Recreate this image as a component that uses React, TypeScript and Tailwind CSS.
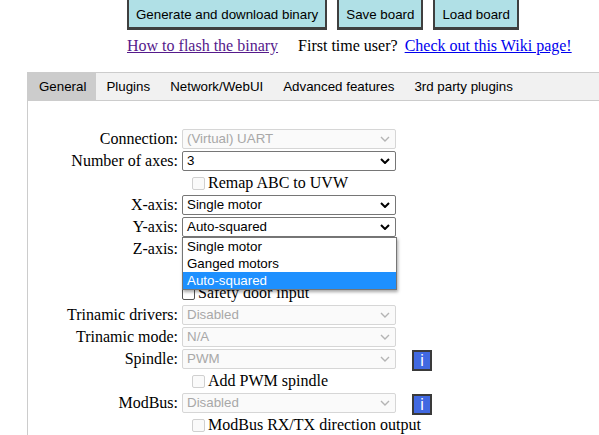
import React from 'react';

const serif = { fontFamily: '"Liberation Serif", "Times New Roman", serif' };
const sans = { fontFamily: '"Liberation Sans", Arial, sans-serif' };

const Chevron: React.FC<{ disabled?: boolean }> = ({ disabled }) => (
    <svg width="10" height="6" viewBox="0 0 10 6" className="shrink-0">
        <path
            d="M1 1 L5 5 L9 1"
            fill="none"
            stroke={disabled ? '#b4b4b4' : '#000'}
            strokeWidth={disabled ? 1.4 : 2}
        />
    </svg>
);

// Поле выбора в стиле нативного select
const Select: React.FC<{ value: string; disabled?: boolean }> = ({ value, disabled }) => (
    <div
        className={
            'ml-[4px] flex h-[20px] w-[214px] items-center justify-between rounded-[2px] border pl-[4px] pr-[5px] text-[13.333px] ' +
            (disabled
                ? 'border-[#d6d6d6] bg-[#fafafa] text-[#a8a8a8]'
                : 'border-[#767676] bg-white text-black')
        }
        style={sans}
    >
        <span>{value}</span>
        <Chevron disabled={disabled} />
    </div>
);

const Checkbox: React.FC<{ label: string; disabled?: boolean; indent?: boolean }> = ({
    label,
    disabled,
    indent,
}) => (
    <div className={'flex h-[22px] items-center ' + (indent ? 'pl-[164px]' : 'pl-[154px]')}>
        <span
            className={
                'h-[13px] w-[13px] rounded-[2px] border ' +
                (disabled ? 'border-[#d0d0d0] bg-[#fafafa]' : 'border-[#555] bg-white')
            }
        />
        <span className="ml-[3px] text-[16px] text-black" style={serif}>
            {label}
        </span>
    </div>
);

const InfoButton: React.FC = () => (
    <div
        className="ml-[16px] mt-[3px] flex h-[21px] w-[20px] items-center justify-center border-2 border-[#3a3a3a] bg-[#4169e1] text-[16px] text-white"
        style={sans}
    >
        i
    </div>
);

const Row: React.FC<{ label: string; value: string; disabled?: boolean; info?: boolean }> = ({
    label,
    value,
    disabled,
    info,
}) => (
    <div className="flex h-[22px] items-center">
        <div className="w-[150px] text-right text-[16px] text-black" style={serif}>
            {label}
        </div>
        <Select value={value} disabled={disabled} />
        {info && <InfoButton />}
    </div>
);

const tabs = ['General', 'Plugins', 'Network/WebUI', 'Advanced features', '3rd party plugins'];

const TopButton: React.FC<{ children: React.ReactNode }> = ({ children }) => (
    <div
        className="flex h-[33px] items-center border-2 border-b-[3px] border-[#3f3f3f] bg-[#b0e0e6] px-[7px] pt-[4px] text-[13.333px] text-black"
        style={sans}
    >
        {children}
    </div>
);

export default function App() {
    return (
        <div className="relative h-[435px] w-[599px] overflow-hidden bg-white">
            {/* Кнопки и ссылки сверху */}
            <div className="-mt-[3px] pl-[127px]">
                <div className="flex gap-[10px]">
                    <TopButton>Generate and download binary</TopButton>
                    <TopButton>Save board</TopButton>
                    <TopButton>Load board</TopButton>
                </div>
                <div className="mt-[7px] flex text-[16px] leading-[18px]" style={serif}>
                    <span className="text-[#551a8b] underline">How to flash the binary</span>
                    <span className="ml-[20px] text-black">First time user?</span>
                    <span className="ml-[7px] text-[#0000ee] underline">Check out this Wiki page!</span>
                </div>
            </div>

            {/* Вкладки */}
            <div className="ml-[27px] mt-[17px] w-[620px] border-l border-t border-[#ccc]">
                <div className="flex h-[28px] border-b border-[#ccc] bg-[#f1f1f1]" style={sans}>
                    {tabs.map((t, i) => (
                        <div
                            key={t}
                            className={
                                'flex items-center px-[10px] text-[13.333px] text-black ' +
                                (i === 0 ? 'bg-[#ccc] pl-[11px]' : '')
                            }
                        >
                            {t}
                        </div>
                    ))}
                </div>

                {/* Общие настройки */}
                <div className="pt-[27px]">
                    <Row label="Connection:" value="(Virtual) UART" disabled />
                    <Row label="Number of axes:" value="3" />
                    <Checkbox label="Remap ABC to UVW" disabled indent />
                    <Row label="X-axis:" value="Single motor" />
                    <Row label="Y-axis:" value="Auto-squared" />
                    {/* Z-axis и следующая строка закрыты раскрытым списком */}
                    <Row label="Z-axis:" value="" />
                    <div className="h-[22px]" />
                    <Checkbox label="Safety door input" />
                    <Row label="Trinamic drivers:" value="Disabled" disabled />
                    <Row label="Trinamic mode:" value="N/A" disabled />
                    <Row label="Spindle:" value="PWM" disabled info />
                    <Checkbox label="Add PWM spindle" disabled indent />
                    <Row label="ModBus:" value="Disabled" disabled info />
                    <Checkbox label="ModBus RX/TX direction output" disabled indent />
                </div>
            </div>

            {/* Открытый список Y-axis */}
            <div
                className="absolute left-[182px] top-[237px] z-10 w-[215px] border border-[#767676] bg-white text-[13.333px] text-black shadow-[1px_2px_3px_rgba(0,0,0,0.35)]"
                style={sans}
            >
                <div className="flex h-[17px] items-center pl-[4px]">Single motor</div>
                <div className="flex h-[17px] items-center pl-[4px]">Ganged motors</div>
                <div className="flex h-[17px] items-center bg-[#1e90ff] pl-[4px] text-white">Auto-squared</div>
            </div>
        </div>
    );
}
